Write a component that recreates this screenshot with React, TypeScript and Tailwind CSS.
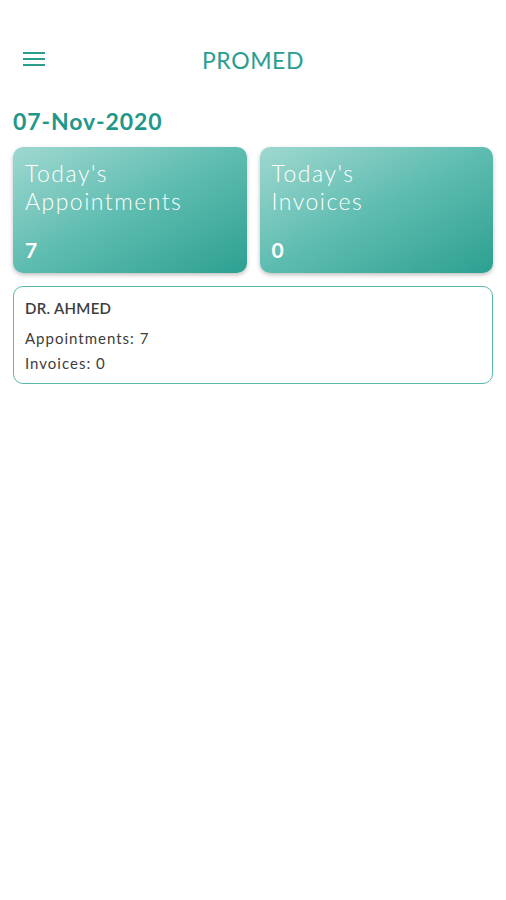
import React from "react";

const font = { fontFamily: "Lato, 'Noto Sans', sans-serif" };

type StatProps = {
  title: string;
  sub: string;
  value: number;
};

const StatCard = ({ title, sub, value }: StatProps) => (
  <div className="flex h-[126px] flex-1 flex-col justify-between rounded-[10px] bg-gradient-to-br from-[#9ed8d0] via-[#5dbcb0] to-[#2aa091] px-[12px] pb-[10px] pt-[12px] text-white shadow-[0_2px_4px_rgba(0,0,0,0.25)]">
    <div className="text-[23px] font-light leading-[28px] tracking-[1.5px]">
      <div>{title}</div>
      <div>{sub}</div>
    </div>
    <div className="text-[21px] font-bold leading-[26px]">{value}</div>
  </div>
);

export default function App() {
  return (
    <div className="min-h-[900px] w-full bg-white" style={font}>
      <header className="relative mt-[30px] flex h-[60px] items-center justify-center">
        <button className="absolute left-[23px] top-[22px] flex flex-col gap-[4px]">
          <span className="block h-[2px] w-[22px] bg-[#2a9d8f]" />
          <span className="block h-[2px] w-[22px] bg-[#2a9d8f]" />
          <span className="block h-[2px] w-[22px] bg-[#2a9d8f]" />
        </button>
        <h1 className="text-[23px] font-normal tracking-[0.6px] text-[#2a9d8f]">PROMED</h1>
      </header>

      <div className="px-[13px]">
        <div className="mt-[17px] text-[23px] font-bold leading-[28px] tracking-[0.9px] text-[#1f978a]">07-Nov-2020</div>

        <div className="mt-[12px] flex gap-[13px]">
          <StatCard title="Today's" sub="Appointments" value={7} />
          <StatCard title="Today's" sub="Invoices" value={0} />
        </div>

        <div className="mt-[13px] rounded-[10px] border border-[#5bb8ac] px-[11px] pb-[10px] pt-[11px] text-[#3d3d3d]">
          <div className="text-[15px] font-semibold leading-[20px] tracking-[0.3px]">DR. AHMED</div>
          <div className="mt-[10px] text-[15px] leading-[20px] tracking-[1px]">Appointments: 7</div>
          <div className="mt-[5px] text-[15px] leading-[20px] tracking-[1px]">Invoices: 0</div>
        </div>
      </div>
    </div>
  );
}
